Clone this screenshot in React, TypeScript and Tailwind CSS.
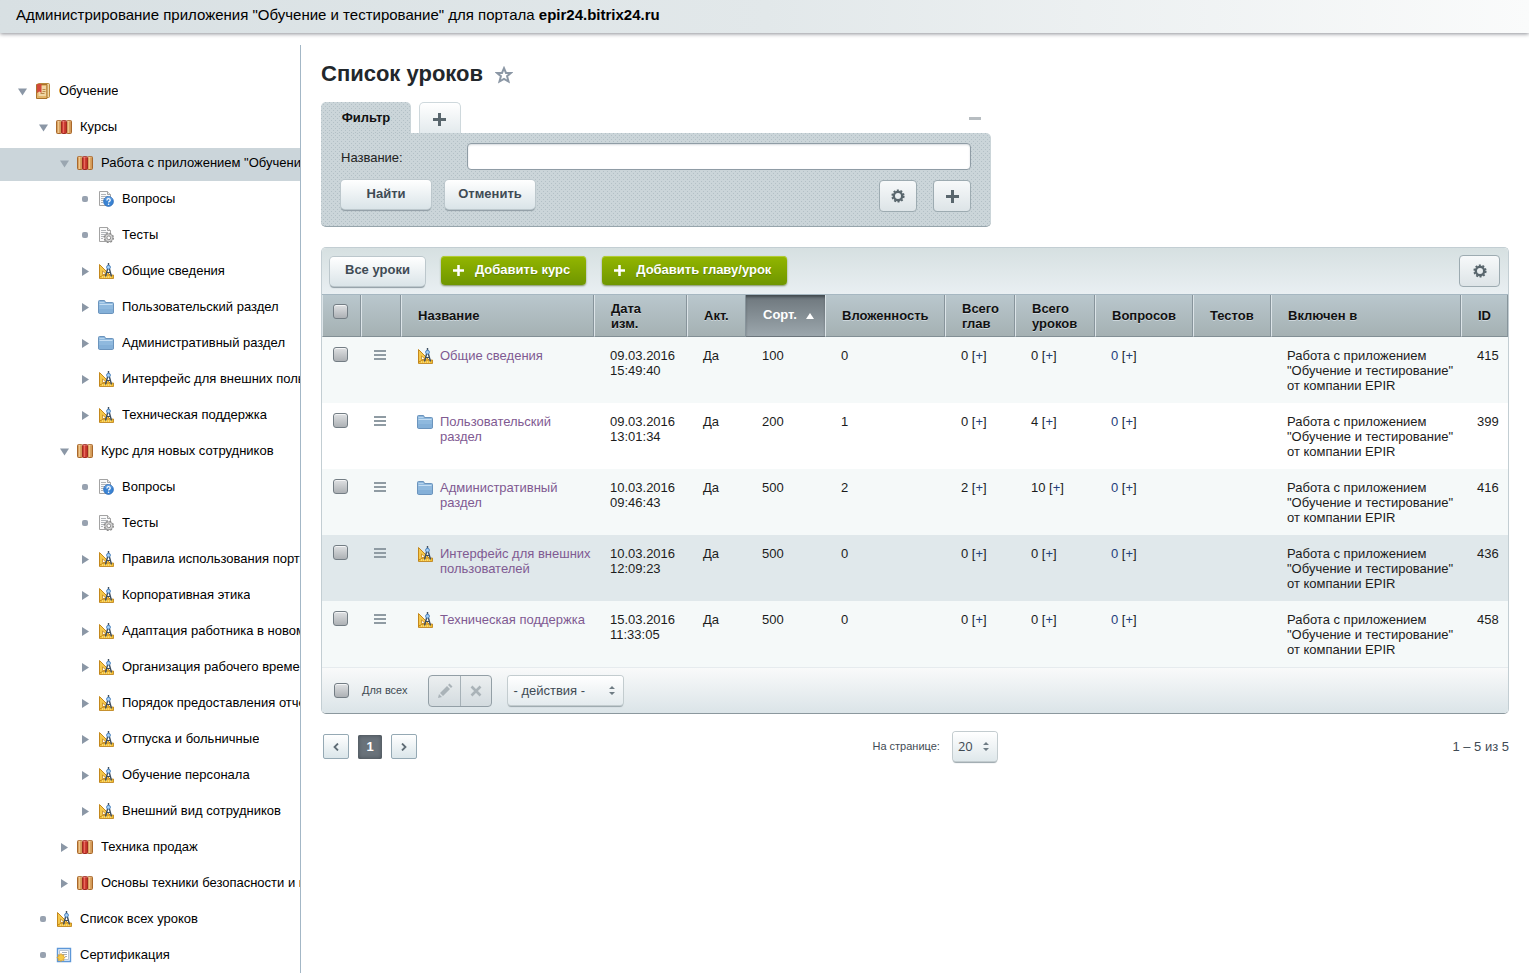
import React, { useState } from "react";

type IconName = "book" | "shelf" | "question" | "test" | "lesson" | "folder" | "cert";

interface TreeItem {
  level: number;
  state: "open" | "closed" | "leaf";
  icon: IconName;
  title: string;
  active?: boolean;
}

const tree: TreeItem[] = [
  { level: 0, state: "open", icon: "book", title: "Обучение" },
  { level: 1, state: "open", icon: "shelf", title: "Курсы" },
  { level: 2, state: "open", icon: "shelf", title: 'Работа с приложением "Обучение и тестирование"', active: true },
  { level: 3, state: "leaf", icon: "question", title: "Вопросы" },
  { level: 3, state: "leaf", icon: "test", title: "Тесты" },
  { level: 3, state: "closed", icon: "lesson", title: "Общие сведения" },
  { level: 3, state: "closed", icon: "folder", title: "Пользовательский раздел" },
  { level: 3, state: "closed", icon: "folder", title: "Административный раздел" },
  { level: 3, state: "closed", icon: "lesson", title: "Интерфейс для внешних пользователей" },
  { level: 3, state: "closed", icon: "lesson", title: "Техническая поддержка" },
  { level: 2, state: "open", icon: "shelf", title: "Курс для новых сотрудников" },
  { level: 3, state: "leaf", icon: "question", title: "Вопросы" },
  { level: 3, state: "leaf", icon: "test", title: "Тесты" },
  { level: 3, state: "closed", icon: "lesson", title: "Правила использования портала" },
  { level: 3, state: "closed", icon: "lesson", title: "Корпоративная этика" },
  { level: 3, state: "closed", icon: "lesson", title: "Адаптация работника в новом коллективе" },
  { level: 3, state: "closed", icon: "lesson", title: "Организация рабочего времени" },
  { level: 3, state: "closed", icon: "lesson", title: "Порядок предоставления отчетов" },
  { level: 3, state: "closed", icon: "lesson", title: "Отпуска и больничные" },
  { level: 3, state: "closed", icon: "lesson", title: "Обучение персонала" },
  { level: 3, state: "closed", icon: "lesson", title: "Внешний вид сотрудников" },
  { level: 2, state: "closed", icon: "shelf", title: "Техника продаж" },
  { level: 2, state: "closed", icon: "shelf", title: "Основы техники безопасности и пожарной безопасности" },
  { level: 1, state: "leaf", icon: "lesson", title: "Список всех уроков" },
  { level: 1, state: "leaf", icon: "cert", title: "Сертификация" },
];

const indent = ["pl-4", "pl-[37px]", "pl-[58px]", "pl-[79px]"];

interface Lesson {
  id: number;
  icon: IconName;
  title: string;
  date: string;
  sort: number;
  depth: number;
  chapters: number;
  lessons: number;
  highlighted?: boolean;
}

const lessons: Lesson[] = [
  { id: 415, icon: "lesson", title: "Общие сведения", date: "09.03.2016 15:49:40", sort: 100, depth: 0, chapters: 0, lessons: 0 },
  { id: 399, icon: "folder", title: "Пользовательский раздел", date: "09.03.2016 13:01:34", sort: 200, depth: 1, chapters: 0, lessons: 4 },
  { id: 416, icon: "folder", title: "Административный раздел", date: "10.03.2016 09:46:43", sort: 500, depth: 2, chapters: 2, lessons: 10 },
  { id: 436, icon: "lesson", title: "Интерфейс для внешних пользователей", date: "10.03.2016 12:09:23", sort: 500, depth: 0, chapters: 0, lessons: 0, highlighted: true },
  { id: 458, icon: "lesson", title: "Техническая поддержка", date: "15.03.2016 11:33:05", sort: 500, depth: 0, chapters: 0, lessons: 0 },
];

function Icon({ name }: { name: IconName }) {
  return (
    <svg className="h-4 w-4 shrink-0" viewBox="0 0 16 16" aria-hidden="true">
      {name === "book" && (
        <>
          <rect x="2.5" y=".5" width="12" height="14" rx="1" fill="#f0d8a4" stroke="#b98a3c" />
          <path d="M1.500 1.500h10.500v14H1.500z" fill="#e2b469" stroke="#a9722b" />
          <path d="M5.500 3h5.500v10H3.500V9z" fill="#f0d6a4" />
          <path d="M2 1h4.500v9L4.300 8.500 2 10z" fill="#d2493a" />
          <path d="M7.500 6.500h3M7.500 8.500h3M5.500 10.500h4" stroke="#b98a4c" />
        </>
      )}
      {name === "shelf" && (
        <>
          <rect x=".5" y="1.500" width="5" height="13" rx="1" fill="#d39a58" stroke="#a9682c" />
          <path d="M2.500 2v12" stroke="#f0c68b" strokeWidth="1.400" />
          <rect x="10.500" y="1.500" width="5" height="13" rx="1" fill="#d39a58" stroke="#a9682c" />
          <path d="M12.500 2v12" stroke="#f0c68b" strokeWidth="1.400" />
          <rect x="5.500" y="1.500" width="5" height="13" rx="1" fill="#c5352b" stroke="#a12a20" />
          <path d="M7.500 2v12" stroke="#e8695c" strokeWidth="1.400" />
          <path d="M1.500 2h13" stroke="#fff" opacity=".3" />
        </>
      )}
      {(name === "question" || name === "test") && (
        <>
          <path d="M1.500.500h8l3 3v11h-11z" fill="#fafafa" stroke="#a3a3a3" />
          <path d="M9.500.500v3h3" fill="#e6e6e6" stroke="#a3a3a3" />
          <path d="M3 3.500h5M3 5.500h7M3 7.500h5M3 9.500h3M3 11.500h2" stroke="#b0b4b8" />
        </>
      )}
      {name === "question" && (
        <>
          <circle cx="10.500" cy="10.500" r="4.900" fill="#3a83d3" stroke="#2d6cb8" strokeWidth=".8" />
          <path d="M7 8.500a4 4 0 0 1 7 0" fill="none" stroke="#8dbcf0" opacity=".7" />
          <path d="M8.900 9.400c0-2.200 3.300-2.200 3.300-.2 0 1.200-1.600 1.100-1.600 2.400" fill="none" stroke="#fff" strokeWidth="1.300" />
          <circle cx="10.600" cy="13.200" r=".8" fill="#fff" />
        </>
      )}
      {name === "test" && (
        <>
          <circle cx="10.800" cy="10.800" r="4.500" fill="none" stroke="#858585" strokeWidth="1.400" strokeDasharray="1.900 1.630" />
          <circle cx="10.800" cy="10.800" r="4" fill="#d9d9d9" stroke="#8d8d8d" strokeWidth=".8" />
          <circle cx="10.800" cy="10.800" r="1.900" fill="#fff" stroke="#8d8d8d" />
        </>
      )}
      {name === "lesson" && (
        <>
          <path d="M1.500 1.500v13h13z" fill="#f5c84c" stroke="#c4881c" />
          <path d="M4.500 7.800v3.700h3.700z" fill="#fff" stroke="#c4881c" strokeWidth=".8" />
          <path d="M6 12h9.500v3.500H1.500V14z" fill="#f4c034" stroke="#b97c14" strokeWidth=".8" />
          <path d="M4.500 13v2M6.500 13v2M8.500 13v2M10.500 13v2M12.500 13v2" stroke="#fbe38f" strokeWidth=".7" />
          <path d="M10.500 0v3M9.700 5.500l-2.200 8M11.300 5.500l2.200 8" stroke="#3f4f60" strokeWidth="1.400" />
          <path d="M8.500 9.500h4" stroke="#3f4f60" />
          <circle cx="10.500" cy="4.200" r="1.900" fill="#a9d0f5" stroke="#4a82bd" />
        </>
      )}
      {name === "folder" && (
        <>
          <path d="M.500 13V2.500q0-1 1-1h4.500q1 0 1.200 1l.2 1h7.100q1 0 1 1V13q0 1.500-1 1.500h-13q-1 0-1-1.500z" fill="#8fb9de" stroke="#6b94bd" />
          <path d="M1.500 5.500h13" stroke="#c5def3" />
          <path d="M1.500 3.500h5" stroke="#b4d2ec" />
          <path d="M1 10h14v3.500q0 .5-.5.500h-13q-.500 0-.500-.500z" fill="#79a8d2" opacity=".5" />
        </>
      )}
      {name === "cert" && (
        <>
          <path d="M1.500 1.500h13v13h-13z" fill="#f4f8fc" stroke="#5d97d8" strokeWidth="1.400" />
          <path d="M3.500 3.500h9v9h-9z" fill="#fff" stroke="#a8b9ca" strokeWidth=".8" />
          <path d="M6 5.500h5M6 7.500h5M9 9.500h2" stroke="#8d9aa8" strokeWidth=".8" />
          <path d="M5 6.500l1 1.700 1.900-.5-.4 1.900 1.700 1-1.700.9.400 2-1.900-.5-1 1.600-1-1.600-1.900.5.400-2-1.700-.9 1.700-1-.4-1.900 1.900.500z" fill="#f6c945" stroke="#d69b25" strokeWidth=".7" />
        </>
      )}
    </svg>
  );
}

function Gear() {
  return (
    <svg className="h-4 w-4" viewBox="0 0 16 16" aria-hidden="true">
      <circle cx="8" cy="8" r="5.800" fill="none" stroke="#59666d" strokeWidth="1.600" strokeDasharray="2 1.640" />
      <circle cx="8" cy="8" r="4.200" fill="none" stroke="#59666d" strokeWidth="2.400" />
    </svg>
  );
}

function Plus({ className }: { className: string }) {
  return (
    <svg className={className} viewBox="0 0 13 13" aria-hidden="true">
      <path d="M5 0h3v5h5v3H8v5H5V8H0V5h5z" fill="currentColor" />
    </svg>
  );
}

function Sorter() {
  return (
    <svg className="pointer-events-none absolute top-0 right-2 h-full w-[6px]" viewBox="0 0 6 9" aria-hidden="true">
      <path d="M3 0l3 3H0zM3 9L0 6h6z" fill="#6f7c84" />
    </svg>
  );
}

function Check({ label }: { label: string }) {
  return (
    <input
      type="checkbox"
      aria-label={label}
      className="block h-[15px] w-[15px] shrink-0 appearance-none rounded-[3px] border border-[#737d84] bg-linear-to-b from-[#dfe1e3] to-[#adb1b5] shadow-[inset_0_1px_0_#f4f5f6] checked:from-[#8b959c] checked:to-[#5f6a72]"
    />
  );
}

function Toggle({ state, title, active }: { state: TreeItem["state"]; title: string; active?: boolean }) {
  if (state === "leaf") {
    return (
      <span className="flex w-3 shrink-0 justify-center">
        <span className="h-[6px] w-[6px] rounded-xs bg-[#98a2b0]" />
      </span>
    );
  }
  return (
    <button
      type="button"
      aria-label={title}
      className={`mt-0.5 w-3 shrink-0 ${active ? "text-[#9aa6b0]" : "text-[#8b97a6]"}`}
    >
      <svg className="mx-auto h-[9px] w-[9px]" viewBox="0 0 9 9" aria-hidden="true">
        <path d={state === "open" ? "M0 1.500h9L4.500 8.500z" : "M1 0L8 4.500 1 9z"} fill="currentColor" />
      </svg>
    </button>
  );
}

function Sidebar() {
  return (
    <nav className="w-[301px] shrink-0 border-r border-[#a3b7c6] pt-[31px]">
      <ul className="flex flex-col gap-[3px]">
        {tree.map((item, i) => (
          <li
            key={i}
            className={`flex h-[33px] items-center pb-1 whitespace-nowrap ${indent[item.level]} ${item.active ? "bg-[#cbd5da]" : ""}`}
          >
            <Toggle state={item.state} title={item.title} active={item.active} />
            <a href="#" className="flex min-w-0 items-center gap-2 pl-[7px]">
              <Icon name={item.icon} />
              <span className="overflow-hidden text-[13px] leading-4">{item.title}</span>
            </a>
          </li>
        ))}
      </ul>
    </nav>
  );
}

const dots =
  "bg-[#cbd5d9] bg-[image:conic-gradient(from_270deg_at_1px_1px,#b3c0c6_90deg,transparent_0),conic-gradient(from_270deg_at_1px_1px,#b3c0c6_90deg,transparent_0)] bg-[size:4px_4px] bg-[position:0_0,2px_2px]";
const grayButton =
  "rounded-[4px] bg-linear-to-b from-white to-[#dae4e8] pb-0.5 text-[13px] font-bold text-[#3f4b54] shadow-[0_0_0_1px_#bcc7cc,0_2px_1px_#8f9ca3]";
const iconButton =
  "flex h-8 items-center justify-center rounded-[4px] border border-[#9dabb1] bg-linear-to-b from-[#f7f9fa] to-[#dde4e7] text-[#59666d]";

function Filter() {
  const [name, setName] = useState("");

  return (
    <section className="max-w-[670px]">
      <div className="flex h-[31px] items-end">
        <button
          type="button"
          className={`h-[31px] w-[90px] rounded-t-[5px] text-[13px] font-bold text-[#111] ${dots}`}
        >
          Фильтр
        </button>
        <button
          type="button"
          aria-label="Добавить фильтр"
          className="ml-2 flex h-[31px] w-[42px] items-center justify-center rounded-t-[5px] border border-b-0 border-[#ced8dc] bg-linear-to-b from-white to-[#e3eaed] pt-0.5 pr-0.5 text-[#59666d]"
        >
          <Plus className="h-[13px] w-[13px]" />
        </button>
        <button type="button" aria-label="Свернуть" className="mr-2.5 mb-[13px] ml-auto h-[3px] w-3 bg-[#b7bdc1]" />
      </div>
      <form
        className={`rounded-[5px] rounded-tl-none border-b border-[#97a5ac] px-5 pt-2.5 pb-3.5 ${dots}`}
        onSubmit={(e) => e.preventDefault()}
      >
        <div className="flex items-center">
          <label htmlFor="name" className="w-[126px] pt-0.5 text-[13px] text-[#222]">
            Название:
          </label>
          <input
            id="name"
            value={name}
            onChange={(e) => setName(e.target.value)}
            className="h-[27px] flex-1 rounded-[4px] border border-[#8f9ca5] bg-white px-2 text-[13px] shadow-[inset_0_1px_2px_#d5dadd] outline-none"
          />
        </div>
        <div className="mt-2.5 flex gap-3.5">
          <button type="submit" className={`h-[29px] w-[90px] ${grayButton}`}>
            Найти
          </button>
          <button type="button" onClick={() => setName("")} className={`h-[29px] w-[90px] ${grayButton}`}>
            Отменить
          </button>
          <div className="ml-auto flex gap-4">
            <button type="button" aria-label="Настройки фильтра" className={`w-[38px] ${iconButton}`}>
              <Gear />
            </button>
            <button type="button" aria-label="Добавить условие" className={`w-[38px] ${iconButton}`}>
              <Plus className="h-[13px] w-[13px]" />
            </button>
          </div>
        </div>
      </form>
    </section>
  );
}

function GreenButton({ children }: { children: React.ReactNode }) {
  return (
    <button
      type="button"
      className="flex h-[29px] items-center gap-[11px] rounded-[4px] bg-linear-to-b from-[#93b600] to-[#6f9600] pr-4 pl-3 text-[13px] font-bold text-white shadow-[inset_0_1px_0_#b3cd33,0_1px_2px_#7f8f60] [text-shadow:0_1px_1px_#5d7d00]"
    >
      <Plus className="h-[11px] w-[11px]" />
      <span className="pb-px">{children}</span>
    </button>
  );
}

const th =
  "border-r border-b border-l border-r-[#87949b] border-b-[#828f95] border-l-[#dce4e8] bg-linear-to-b from-[#b9c7cd] to-[#a5b1b3] pl-4 text-left font-bold text-[#111] [text-shadow:0_1px_0_#cdd7dc]";

function Count({ value, link }: { value: number; link?: boolean }) {
  return (
    <>
      {link ? (
        <a href="#" className="text-[#1f3f7c]">
          {value}
        </a>
      ) : (
        value
      )}{" "}
      [
      <a href="#" className="text-[#1f3f7c]">
        +
      </a>
      ]
    </>
  );
}

function LessonTable() {
  return (
    <table className="w-full table-fixed border-separate border-spacing-0 text-[13px] leading-[15px] text-[#1c1c1c]">
      <colgroup>
        <col className="w-[39px]" />
        <col className="w-[40px]" />
        <col />
        <col className="w-[93px]" />
        <col className="w-[59px]" />
        <col className="w-[79px]" />
        <col className="w-[120px]" />
        <col className="w-[70px]" />
        <col className="w-[80px]" />
        <col className="w-[98px]" />
        <col className="w-[78px]" />
        <col className="w-[190px]" />
        <col className="w-[47px]" />
      </colgroup>
      <thead>
        <tr className="h-[42px]">
          <th className={`${th} pb-2 pl-[10px]`}>
            <Check label="Выбрать все" />
          </th>
          <th className={th} aria-label="Действия" />
          <th className={th}>Название</th>
          <th className={th}>
            Дата
            <br />
            изм.
          </th>
          <th className={th}>Акт.</th>
          <th className="border-b border-[#6b757c] bg-linear-to-b from-[#6d767c] to-[#9ca7ad] pb-0.5 pl-[17px] text-left font-bold text-white shadow-[inset_0_3px_3px_-1px_#3f474c] [text-shadow:0_1px_2px_#4a5359]">
            <button type="button" className="flex items-center gap-[9px]">
              Сорт.
              <svg className="mt-0.5 h-[6px] w-2" viewBox="0 0 8 6" aria-hidden="true">
                <path d="M4 0l4 6H0z" fill="#fff" />
              </svg>
            </button>
          </th>
          <th className={th}>Вложенность</th>
          <th className={th}>Всего глав</th>
          <th className={th}>Всего уроков</th>
          <th className={th}>Вопросов</th>
          <th className={th}>Тестов</th>
          <th className={th}>Включен в</th>
          <th className={th}>ID</th>
        </tr>
      </thead>
      <tbody className="[&_td]:pt-[11px] [&_td]:pb-2.5 [&_td]:pl-4 [&_td]:align-top">
        {lessons.map((row, i) => (
          <tr key={row.id} className={row.highlighted ? "bg-[#e0e8eb]" : i % 2 ? "bg-white" : "bg-[#f5f9f9]"}>
            <td className="pt-2.5! pl-[11px]!">
              <Check label={row.title} />
            </td>
            <td className="pt-2.5! pl-[13px]!">
              <button type="button" aria-label="Меню" className="mt-[3px] flex w-3 flex-col gap-0.5">
                <span className="h-0.5 w-3 bg-[#8f9ba3]" />
                <span className="h-0.5 w-3 bg-[#8f9ba3]" />
                <span className="h-0.5 w-3 bg-[#8f9ba3]" />
              </button>
            </td>
            <td>
              <a href="#" className="flex gap-[7px] text-[#7f5a92]">
                <Icon name={row.icon} />
                {row.title}
              </a>
            </td>
            <td>{row.date}</td>
            <td>Да</td>
            <td>{row.sort}</td>
            <td>{row.depth}</td>
            <td>
              <Count value={row.chapters} />
            </td>
            <td>
              <Count value={row.lessons} />
            </td>
            <td>
              <Count value={0} link />
            </td>
            <td />
            <td>Работа с приложением "Обучение и тестирование" от компании EPIR</td>
            <td>{row.id}</td>
          </tr>
        ))}
      </tbody>
    </table>
  );
}

export default function App() {
  return (
    <div className="flex min-h-screen flex-col bg-white font-['Liberation_Sans',Arial,sans-serif] text-black">
      <header className="h-[33px] bg-linear-to-r from-[#d8e0e3] via-[#e2e8ea] to-[#fafbfb] px-4 pt-1.5 text-[15px] leading-[18px] shadow-[0_1px_4px_#8d8f95]">
        Администрирование приложения "Обучение и тестирование" для портала <b>epir24.bitrix24.ru</b>
      </header>

      <div className="mt-3 flex flex-1">
        <Sidebar />

        <main className="min-w-0 flex-1 px-5 pt-4">
          <div className="mb-[15px] flex items-center gap-3">
            <h1 className="text-[22px] leading-[26px] font-bold text-[#22272b]">Список уроков</h1>
            <button type="button" aria-label="В избранное">
              <svg className="mt-0.5 h-[18px] w-[18px]" viewBox="0 0 18 18" aria-hidden="true">
                <path
                  d="M9 2.200l2 4.700h5l-3.900 3.300 1.400 5.300L9 12.800l-4.500 2.700 1.400-5.300L2 6.900h5z"
                  fill="none"
                  stroke="#8b97a5"
                  strokeWidth="2"
                />
              </svg>
            </button>
          </div>

          <Filter />

          <section className="mt-5 overflow-hidden rounded-[5px] border border-[#c3ced3] border-b-[#8b989e]">
            <div className="flex h-[47px] items-center border-b border-[#a6b7c1] bg-linear-to-b from-[#d6e0e1] to-[#e9eff2] pr-2 pl-2">
              <button type="button" className={`mr-4 h-[29px] px-[15px] ${grayButton}`}>
                Все уроки
              </button>
              <div className="flex gap-4 pb-0.5">
                <GreenButton>Добавить курс</GreenButton>
                <GreenButton>Добавить главу/урок</GreenButton>
              </div>
              <button type="button" aria-label="Настройки списка" className={`ml-auto w-[41px] ${iconButton}`}>
                <Gear />
              </button>
            </div>

            <LessonTable />

            <div className="flex h-[46px] items-center border-t border-[#e6ebee] bg-linear-to-b from-[#f9fafa] to-[#dbe4e8] pl-3 text-[#3f4b54]">
              <label className="flex items-center gap-[13px] text-[11px]">
                <Check label="Для всех" />
                Для всех
              </label>
              <div className="ml-[21px] flex h-8 w-16 overflow-hidden rounded-[4px] border border-[#939fa6] bg-linear-to-b from-[#eceff0] to-[#d3dbdf] text-[#aab3b8]">
                <button
                  type="button"
                  aria-label="Изменить"
                  className="flex w-8 items-center justify-center border-r border-[#a6b1b7]"
                >
                  <svg className="h-4 w-4" viewBox="0 0 16 16" aria-hidden="true">
                    <path d="M1 15l1-4 3 3zM3 10l7-7 3 3-7 7zM11 2l1.500-1.500 3 3L14 5z" fill="currentColor" />
                  </svg>
                </button>
                <button type="button" aria-label="Удалить" className="flex flex-1 items-center justify-center">
                  <svg className="h-3 w-3" viewBox="0 0 12 12" aria-hidden="true">
                    <path d="M1.500 1.500l9 9M10.500 1.500l-9 9" stroke="currentColor" strokeWidth="2.600" />
                  </svg>
                </button>
              </div>
              <div className="relative ml-4">
                <select
                  aria-label="Действия"
                  className="block h-[29px] w-[115px] appearance-none rounded-[3px] bg-linear-to-b from-white to-[#e4ebee] pl-[5px] text-[13px] shadow-[0_0_0_1px_#c3cccf,0_2px_1px_#9aa6ab]"
                >
                  <option>- действия -</option>
                </select>
                <Sorter />
              </div>
            </div>
          </section>

          <div className="mt-[18px] flex items-center justify-between pl-0.5 text-[#3f4b54]">
            <div className="flex items-center gap-[9px]">
              <button
                type="button"
                aria-label="Назад"
                className="flex h-[25px] w-[26px] items-center justify-center rounded-xs border border-[#95a9b4] bg-linear-to-b from-white to-[#dbe6ea]"
              >
                <svg className="h-2 w-[6px]" viewBox="0 0 6 8" aria-hidden="true">
                  <path d="M5 .500L1.500 4 5 7.500" fill="none" stroke="#5f6c75" strokeWidth="1.800" />
                </svg>
              </button>
              <span className="flex h-6 w-6 items-center justify-center rounded-xs bg-[#69727a] text-[13px] font-bold text-white shadow-[inset_0_0_4px_#41494f]">
                1
              </span>
              <button
                type="button"
                aria-label="Вперед"
                className="flex h-[25px] w-[26px] items-center justify-center rounded-xs border border-[#95a9b4] bg-linear-to-b from-white to-[#dbe6ea]"
              >
                <svg className="h-2 w-[6px]" viewBox="0 0 6 8" aria-hidden="true">
                  <path d="M1 .500L4.500 4 1 7.500" fill="none" stroke="#5f6c75" strokeWidth="1.800" />
                </svg>
              </button>
            </div>
            <div className="flex items-center gap-[13px]">
              <label htmlFor="per-page" className="text-[11px]">
                На странице:
              </label>
              <div className="relative">
                <select
                  id="per-page"
                  className="block h-[29px] w-11 appearance-none rounded-[3px] bg-linear-to-b from-white to-[#dfe8eb] pl-[5px] font-['Open_Sans',sans-serif] text-[13px] shadow-[0_0_0_1px_#c3cccf,0_2px_1px_#9aa6ab]"
                >
                  <option>20</option>
                </select>
                <Sorter />
              </div>
            </div>
            <span className="text-[13px]">1 – 5 из 5</span>
          </div>
        </main>
      </div>
    </div>
  );
}
